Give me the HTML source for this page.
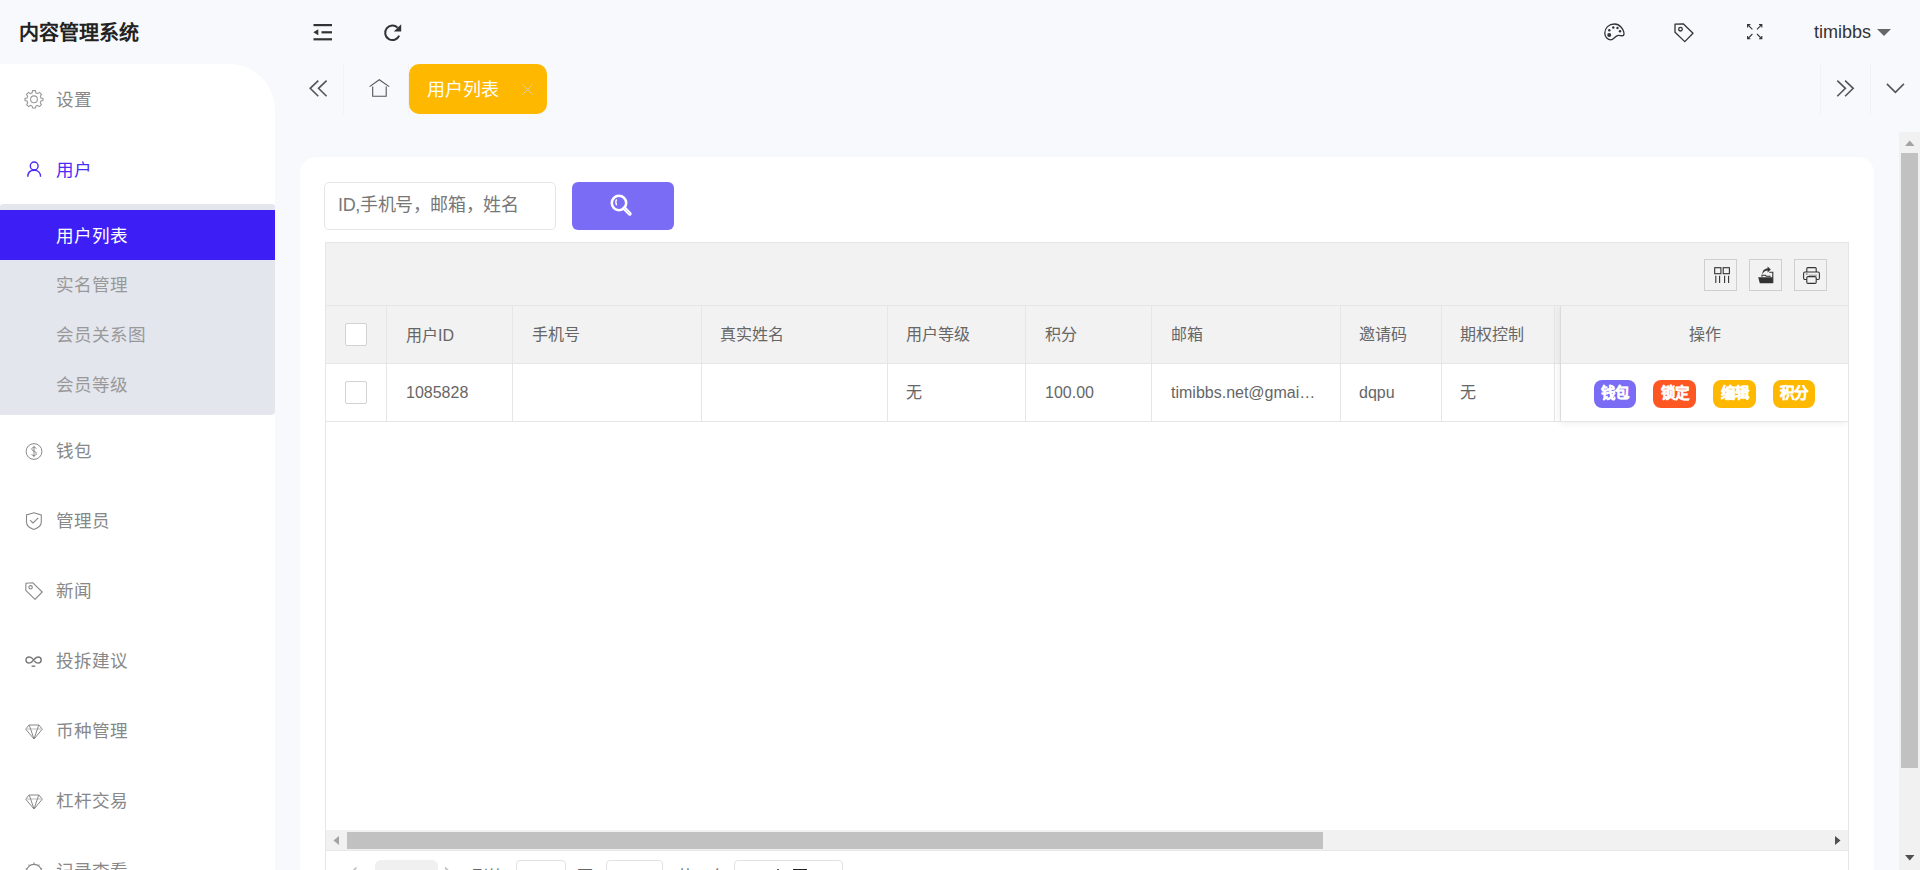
<!DOCTYPE html>
<html lang="zh-CN"><head><meta charset="utf-8">
<style>
*{box-sizing:border-box;margin:0;padding:0}
html,body{width:1920px;height:870px;overflow:hidden}
body{background:#f8f9fc;font-family:"Liberation Sans",sans-serif;color:#333;position:relative}
.a{position:absolute}
svg{position:absolute;overflow:visible}
.t{position:absolute;white-space:nowrap;line-height:24px}
/* header */
.logo{left:19px;top:20px;font-size:20px;font-weight:bold;color:#222;line-height:26px}
/* sidebar */
.side{left:0;top:64px;width:275px;height:806px;background:#fff;border-top-right-radius:46px}
.mt{font-size:17.6px;color:#888;left:56px}
.sub{left:0;top:204px;width:275px;height:211px;background:#e4e6ee;border-radius:3px 3px 4px 0}
.act{left:0;top:210px;width:275px;height:50px;background:#3d1ef5}
.st{font-size:17.6px;color:#999;left:56px}
/* tabs */
.sep{width:1px;top:64px;height:50px;background:#f1f2f5}
.tab{left:409px;top:64px;width:138px;height:50px;background:#ffb800;border-radius:10px}
/* card */
.card{left:300px;top:157px;width:1574px;height:760px;background:#fff;border-radius:16px}
.inp{left:324px;top:182px;width:232px;height:48px;border:1px solid #e6e6e6;border-radius:5px;background:#fff}
.sbtn{left:572px;top:182px;width:102px;height:48px;background:#7b6cf6;border-radius:6px}
.tool{left:325px;top:242px;width:1524px;height:64px;background:#f2f2f2;border:1px solid #e6e6e6;border-bottom:none}
.tb{top:259px;width:33px;height:32px;border:1px solid #cfcfcf;background:#f2f2f2}
.grid{left:325px;top:305px;width:1524px;height:600px;border:1px solid #e6e6e6;border-top:none;background:#fff}
.hrow{left:326px;top:305px;width:1522px;height:59px;background:#f2f2f2;border-top:1px solid #e6e6e6;border-bottom:1px solid #e6e6e6}
.rline{left:326px;top:421px;width:1522px;height:1px;background:#e6e6e6}
.vl{width:1px;background:#e6e6e6;top:305px;height:117px}
.c{font-size:16px;color:#666;line-height:20px}
.cb{width:22px;height:23px;border:1px solid #d2d2d2;border-radius:2px;background:#fff}
.btn{top:380px;height:28px;border-radius:8px;color:#fff;font-size:14.5px;font-weight:bold;line-height:27px;text-align:center;width:42px;-webkit-text-stroke:0.35px #fff}
</style></head>
<body>
<!-- HEADER -->
<div class="t logo">内容管理系统</div>
<!-- collapse icon -->
<svg style="left:313px;top:24px" width="20" height="17" viewBox="0 0 20 17">
  <rect x="0.5" y="0" width="18.5" height="2.2" fill="#333"/>
  <rect x="8.5" y="7.2" width="10.5" height="2.2" fill="#333"/>
  <rect x="0.5" y="14.2" width="18.5" height="2.2" fill="#333"/>
  <path d="M0.3 8.3 L5.3 5.3 L5.3 11.3 Z" fill="#333"/>
</svg>
<!-- refresh icon -->
<svg style="left:383px;top:23px" width="20" height="20" viewBox="0 0 20 20">
  <path d="M16.2 12.6 A7.3 7.3 0 1 1 14.6 4.6" fill="none" stroke="#333" stroke-width="2"/>
  <path d="M18.2 1.2 L18.2 8.6 L10.8 8.6 Z" fill="#333"/>
</svg>
<!-- palette -->
<svg style="left:1604px;top:23px" width="21" height="18" viewBox="0 0 21 18">
  <path d="M10.5 1 C4.8 1 0.8 5 0.8 10 C0.8 14.3 4 16.9 6.8 16.9 C9.5 16.9 10.8 13.4 13.5 12.6 C15.5 12 18.5 13.5 19.6 12.3 C20.7 10.8 19.5 6.8 17.2 4.2 C15.5 2.2 13.2 1 10.5 1 Z" fill="none" stroke="#333" stroke-width="1.3"/>
  <circle cx="5.2" cy="12" r="2" fill="#333"/>
  <circle cx="5.3" cy="7.3" r="1.2" fill="#333"/>
  <circle cx="9.3" cy="4.5" r="1.2" fill="#333"/>
  <circle cx="13.5" cy="5" r="1.2" fill="#333"/>
  <circle cx="16" cy="8.2" r="1.2" fill="#333"/>
</svg>
<!-- tag -->
<svg style="left:1674px;top:23px" width="20" height="20" viewBox="0 0 20 20">
  <path d="M1 1.2 L9.2 0.8 L19 10.3 L10.8 18.6 L1 9.2 Z" fill="none" stroke="#333" stroke-width="1.3" stroke-linejoin="round"/>
  <circle cx="6.5" cy="6.2" r="1.8" fill="none" stroke="#333" stroke-width="1.3"/>
</svg>
<!-- fullscreen -->
<svg style="left:1747px;top:24px" width="16" height="16" viewBox="0 0 16 16" fill="none" stroke="#333" stroke-width="1.1">
  <path d="M0.6 3.4 V0.6 H3.4 M0.6 0.6 L5.4 5.4"/>
  <path d="M12 0.6 H14.8 V3.4 M14.8 0.6 L10 5.4"/>
  <path d="M0.6 12 V14.8 H3.4 M0.6 14.8 L5.4 10"/>
  <path d="M14.8 12 V14.8 H12 M14.8 14.8 L10 10"/>
</svg>
<div class="t" style="left:1814px;top:20px;font-size:18px;color:#333;line-height:24px">timibbs</div>
<svg style="left:1877px;top:29px" width="14" height="7" viewBox="0 0 14 7"><path d="M0 0 H14 L7 7 Z" fill="#666"/></svg>

<!-- SIDEBAR -->
<div class="a side"></div>
<div class="t mt" style="top:88px">设置</div>
<div class="t mt" style="top:158px;color:#4a2cf5">用户</div>
<div class="a sub"></div>
<div class="a act"></div>
<div class="t st" style="top:224px;color:#fff">用户列表</div>
<div class="t st" style="top:273px">实名管理</div>
<div class="t st" style="top:323px">会员关系图</div>
<div class="t st" style="top:373px">会员等级</div>
<div class="t mt" style="top:439px">钱包</div>
<div class="t mt" style="top:509px">管理员</div>
<div class="t mt" style="top:579px">新闻</div>
<div class="t mt" style="top:649px">投拆建议</div>
<div class="t mt" style="top:719px">币种管理</div>
<div class="t mt" style="top:789px">杠杆交易</div>
<div class="t mt" style="top:859px">记录查看</div>

<!-- TABS -->
<div class="a sep" style="left:343px"></div>
<div class="a sep" style="left:408px"></div>
<div class="a sep" style="left:1820px"></div>
<div class="a sep" style="left:1870px"></div>
<div class="a tab"></div>
<div class="t" style="left:427px;top:78px;font-size:18px;color:#fff">用户列表</div>

<!-- CARD -->
<div class="a card"></div>
<div class="a inp"></div>
<div class="t" style="left:338px;top:193px;font-size:18px;color:#777;letter-spacing:-0.36px">ID,手机号，邮箱，姓名</div>
<div class="a sbtn"></div>
<div class="a tool"></div>
<div class="a tb" style="left:1704px"></div>
<div class="a tb" style="left:1749px"></div>
<div class="a tb" style="left:1794px"></div>
<div class="a grid"></div>
<div class="a hrow"></div>
<div class="a rline"></div>
<div class="a vl" style="left:386px"></div>
<div class="a vl" style="left:512px"></div>
<div class="a vl" style="left:701px"></div>
<div class="a vl" style="left:887px"></div>
<div class="a vl" style="left:1025px"></div>
<div class="a vl" style="left:1151px"></div>
<div class="a vl" style="left:1340px"></div>
<div class="a vl" style="left:1441px"></div>
<div class="a vl" style="left:1554px"></div>
<div class="a vl" style="left:1560px"></div>
<div class="a cb" style="left:345px;top:323px"></div>
<div class="a cb" style="left:345px;top:381px"></div>
<div class="t c" style="left:406px;top:326px">用户ID</div>
<div class="t c" style="left:532px;top:325px">手机号</div>
<div class="t c" style="left:720px;top:325px">真实姓名</div>
<div class="t c" style="left:906px;top:325px">用户等级</div>
<div class="t c" style="left:1045px;top:325px">积分</div>
<div class="t c" style="left:1171px;top:325px">邮箱</div>
<div class="t c" style="left:1359px;top:325px">邀请码</div>
<div class="t c" style="left:1460px;top:325px">期权控制</div>
<div class="t c" style="left:1689px;top:325px">操作</div>
<div class="t c" style="left:406px;top:383px">1085828</div>
<div class="t c" style="left:906px;top:383px">无</div>
<div class="t c" style="left:1045px;top:383px">100.00</div>
<div class="t c" style="left:1171px;top:383px">timibbs.net@gmai…</div>
<div class="t c" style="left:1359px;top:383px">dqpu</div>
<div class="t c" style="left:1460px;top:383px">无</div>
<div class="a btn" style="left:1594px;background:#7b6cf6">钱包</div>
<div class="a btn" style="left:1653px;width:43px;background:#ff5722">锁定</div>
<div class="a btn" style="left:1713px;width:43px;background:#ffb800">编辑</div>
<div class="a btn" style="left:1773px;background:#ffb800">积分</div>

<!-- TAB ICONS -->
<svg style="left:309px;top:80px" width="19" height="17" viewBox="0 0 19 17" fill="none" stroke="#555" stroke-width="1.6">
  <path d="M9.3 0.6 L1.2 8.3 L9.3 16.2"/>
  <path d="M17.6 0.6 L9.5 8.3 L17.6 16.2"/>
</svg>
<svg style="left:368.5px;top:79px" width="21" height="18" viewBox="0 0 21 18" fill="none" stroke="#555" stroke-width="1.1">
  <path d="M0.6 7.6 L10.3 0.7 L20.2 7.6"/>
  <path d="M3.7 7.6 V17.2 H17.2 V7.6"/>
</svg>
<svg style="left:522px;top:84px" width="11" height="11" viewBox="0 0 11 11" fill="none" stroke="#d9cfa8" stroke-width="1">
  <path d="M0.5 0.5 L10.5 10.5 M10.5 0.5 L0.5 10.5"/>
</svg>
<svg style="left:1836px;top:80px" width="19" height="17" viewBox="0 0 19 17" fill="none" stroke="#555" stroke-width="1.6">
  <path d="M1.3 0.6 L9.4 8.3 L1.3 16.2"/>
  <path d="M9.1 0.6 L17.2 8.3 L9.1 16.2"/>
</svg>
<svg style="left:1886px;top:83px" width="19" height="11" viewBox="0 0 19 11" fill="none" stroke="#555" stroke-width="1.6">
  <path d="M0.9 0.9 L9.4 9.3 L17.9 0.9"/>
</svg>

<!-- SIDEBAR ICONS -->
<svg style="left:25px;top:90px" width="18" height="18" viewBox="0 0 18 18" fill="none" stroke="#999" stroke-width="1.1">
  <path d="M7.6 0.6 H10.4 L10.9 2.8 L12.6 3.6 L14.5 2.4 L16.5 4.4 L15.3 6.3 L16 8 L18 8.5 V10.5 L16 11 L15.3 12.7 L16.4 14.6 L14.4 16.6 L12.5 15.4 L10.9 16.1 L10.4 18 H7.6 L7.1 16.1 L5.5 15.4 L3.6 16.6 L1.6 14.6 L2.7 12.7 L2 11 L0 10.5 V8.5 L2 8 L2.7 6.3 L1.5 4.4 L3.5 2.4 L5.4 3.6 L7.1 2.8 Z"/>
  <circle cx="9" cy="9.3" r="3.4"/>
</svg>
<svg style="left:27px;top:161px" width="15" height="16" viewBox="0 0 15 16" fill="none" stroke="#4a2cf5" stroke-width="1.4">
  <circle cx="7.2" cy="4.9" r="3.9"/>
  <path d="M0.8 15.8 C0.8 11.5 3.5 9.2 7.2 9.2 C10.9 9.2 13.6 11.5 13.6 15.8"/>
</svg>
<svg style="left:25px;top:443px" width="18" height="18" viewBox="0 0 18 18" fill="none" stroke="#888" stroke-width="1">
  <circle cx="9" cy="8.5" r="7.9"/>
  <path d="M11.2 5.6 C10.8 4.6 10 4.3 9 4.3 C7.6 4.3 6.8 5 6.8 6.1 C6.8 8.6 11.3 7.6 11.3 10.6 C11.3 11.9 10.3 12.6 9 12.6 C7.7 12.6 6.9 12 6.6 11"/>
  <path d="M9 2.8 V14.2"/>
</svg>
<svg style="left:26px;top:512px" width="16" height="18" viewBox="0 0 16 18" fill="none" stroke="#888" stroke-width="1.1">
  <path d="M7.8 0.8 L15.3 3 V10 C15.3 13.8 11.5 16.2 7.8 17.4 C4.1 16.2 0.5 13.8 0.5 10 V3 Z"/>
  <path d="M4 8.2 L7 11 L12.3 5.8"/>
</svg>
<svg style="left:25px;top:582px" width="18" height="18" viewBox="0 0 18 18" fill="none" stroke="#888" stroke-width="1.1">
  <path d="M0.9 1.2 L7.9 0.8 L17.2 10 L10 17.3 L0.8 8.4 Z" stroke-linejoin="round"/>
  <circle cx="5.6" cy="5.3" r="1.7"/>
</svg>
<svg style="left:25px;top:656px" width="18" height="11" viewBox="0 0 18 11" fill="none" stroke="#777" stroke-width="1.4">
  <path d="M8.5 3.6 C7 1.8 5.8 1 4.3 1 C2.3 1 1 2.3 1 4.1 C1 5.9 2.3 7.1 4.1 7.1 C6.1 7.1 7.2 5.8 8.5 4.2 C9.8 2.5 11 1 13 1 C14.8 1 16.2 2.2 16.2 4 C16.2 5.9 14.8 7.1 13 7.1 C11.6 7.1 10.5 6.3 9.4 5"/>
  <path d="M6.6 10.2 H10.2"/>
</svg>
<svg style="left:25px;top:724px" width="18" height="16" viewBox="0 0 18 16" fill="none" stroke="#888" stroke-width="1">
  <path d="M4 1 H14 L17.3 5.2 L9 15 L0.7 5.2 Z" stroke-linejoin="round"/>
  <path d="M1 5 H17" stroke="#bbb"/>
  <path d="M4.3 1.2 L9 15 L13.7 1.2"/>
</svg>
<svg style="left:25px;top:794px" width="18" height="16" viewBox="0 0 18 16" fill="none" stroke="#888" stroke-width="1">
  <path d="M4 1 H14 L17.3 5.2 L9 15 L0.7 5.2 Z" stroke-linejoin="round"/>
  <path d="M1 5 H17" stroke="#bbb"/>
  <path d="M4.3 1.2 L9 15 L13.7 1.2"/>
</svg>
<svg style="left:25px;top:861px" width="18" height="18" viewBox="0 0 18 18" fill="none" stroke="#888" stroke-width="1.1">
  <circle cx="9" cy="11" r="7.6"/>
  <path d="M9 1.6 V3.2 M3.6 3.6 L4.6 4.6 M14.4 3.6 L13.4 4.6 M0.8 7.6 L2 8 M17.2 7.6 L16 8"/>
</svg>

<!-- SEARCH ICON -->
<svg style="left:610px;top:194px" width="23" height="23" viewBox="0 0 23 23">
  <circle cx="9" cy="9" r="7.2" fill="none" stroke="#fff" stroke-width="2.6"/>
  <path d="M14.2 14.2 L19.8 19.8" stroke="#fff" stroke-width="3.8" stroke-linecap="round"/>
  <path d="M14.6 14.6 L19.4 19.4" stroke="#c9c2fb" stroke-width="0.9" stroke-linecap="round"/>
  <path d="M6.3 6 C5.6 7.4 5.6 9.2 6.4 10.6" fill="none" stroke="#fff" stroke-width="1.6" stroke-linecap="round"/>
</svg>
<!-- TOOLBAR ICONS -->
<svg style="left:1714px;top:267px" width="16" height="17" viewBox="0 0 16 17" fill="none" stroke="#333" stroke-width="1.1">
  <rect x="0.7" y="0.7" width="6.2" height="6"/>
  <rect x="9.2" y="0.7" width="6.2" height="6"/>
  <path d="M1.8 8.8 V16 M5.6 8.8 V16 M10.6 8.8 V16 M14.6 8.8 V16"/>
</svg>
<svg style="left:1758px;top:266px" width="16" height="18" viewBox="0 0 16 18">
  <path d="M4.3 8.6 C4.3 4.8 6.4 2.6 9.6 2.6 V0.6 L12.8 3.6 L9.6 6.6 V4.6 C7.4 4.6 5.4 6 4.3 8.6 Z" fill="#333"/>
  <path d="M4 10.8 V9.2 H7.3 L8.2 10.2 H12 V11" fill="none" stroke="#333" stroke-width="1.1"/>
  <path d="M11.2 6.2 H14.8 V17" fill="none" stroke="#333" stroke-width="1.1"/>
  <path d="M0.2 11.3 H14.8 V17.2 H1.8 Z" fill="#333"/>
</svg>
<svg style="left:1803px;top:267px" width="17" height="17" viewBox="0 0 17 17" fill="none" stroke="#333" stroke-width="1.1">
  <path d="M3.8 5 V1.6 C3.8 1 4.2 0.6 4.8 0.6 H12.2 C12.8 0.6 13.2 1 13.2 1.6 V5"/>
  <path d="M3.8 12.5 H2 C1.2 12.5 0.6 11.9 0.6 11.1 V6.4 C0.6 5.6 1.2 5 2 5 H15 C15.8 5 16.4 5.6 16.4 6.4 V11.1 C16.4 11.9 15.8 12.5 15 12.5 H13.2"/>
  <rect x="3.8" y="9.6" width="9.4" height="6.8" rx="1.2"/>
  <path d="M2.8 7 H4.6" stroke-width="0.8"/>
  <path d="M5.6 8.2 H14" stroke-width="0.8" stroke="#777"/>
</svg>

<!-- FIXED COL SHADOW -->
<div class="a" style="left:326px;top:306px;width:1522px;height:524px;overflow:hidden">
  <div class="a" style="left:1235px;top:-2px;width:287px;height:118px;box-shadow:-1px 0 8px rgba(0,0,0,0.09)"></div>
</div>
<!-- H SCROLLBAR -->
<div class="a" style="left:326px;top:830px;width:1522px;height:20px;background:#f1f1f1"></div>
<div class="a" style="left:326px;top:850px;width:1522px;height:1px;background:#e6e6e6"></div>
<div class="a" style="left:347px;top:832px;width:976px;height:17px;background:#c1c1c1"></div>
<svg style="left:333px;top:836px" width="6" height="9" viewBox="0 0 6 9"><path d="M6 0 V9 L0.5 4.5 Z" fill="#a3a3a3"/></svg>
<svg style="left:1835px;top:836px" width="6" height="9" viewBox="0 0 6 9"><path d="M0 0 V9 L5.5 4.5 Z" fill="#505050"/></svg>

<!-- PAGINATION (partially visible) -->
<div class="a" style="left:375px;top:860px;width:63px;height:20px;background:#f0f0f0;border-radius:6px"></div>
<div class="a" style="left:516px;top:860px;width:50px;height:20px;border:1px solid #e2e2e2;border-radius:4px"></div>
<div class="a" style="left:606px;top:860px;width:57px;height:20px;border:1px solid #e2e2e2;border-radius:4px"></div>
<div class="a" style="left:734px;top:860px;width:109px;height:20px;border:1px solid #e2e2e2;border-radius:4px"></div>
<svg style="left:345px;top:861px" width="20" height="20" viewBox="0 0 20 20"><path d="M11.5 6.5 L5.5 12.5" stroke="#bbb" stroke-width="1.6" fill="none"/></svg>
<svg style="left:440px;top:861px" width="20" height="20" viewBox="0 0 20 20"><path d="M5 6.5 L11 12.5" stroke="#bbb" stroke-width="1.6" fill="none"/></svg>
<div class="t" style="left:472px;top:865px;font-size:16px;color:#666">到第</div>
<div class="t" style="left:577px;top:865px;font-size:16px;color:#666">页</div>
<div class="t" style="left:677px;top:865px;font-size:16px;color:#666">共 1 条</div>
<div class="a" style="left:777px;top:869px;width:2px;height:1px;background:#666"></div>
<div class="a" style="left:793px;top:869px;width:14px;height:1px;background:#222"></div>

<!-- V SCROLLBAR -->
<div class="a" style="left:1899px;top:132px;width:21px;height:738px;background:#f1f1f1"></div>
<div class="a" style="left:1901px;top:153px;width:17px;height:615px;background:#c1c1c1"></div>
<svg style="left:1905px;top:140px" width="10" height="6" viewBox="0 0 10 6"><path d="M0 6 H9.5 L4.75 0.5 Z" fill="#a3a3a3"/></svg>
<svg style="left:1905px;top:855px" width="10" height="6" viewBox="0 0 10 6"><path d="M0 0 H9.5 L4.75 5.5 Z" fill="#505050"/></svg>

</body></html>
